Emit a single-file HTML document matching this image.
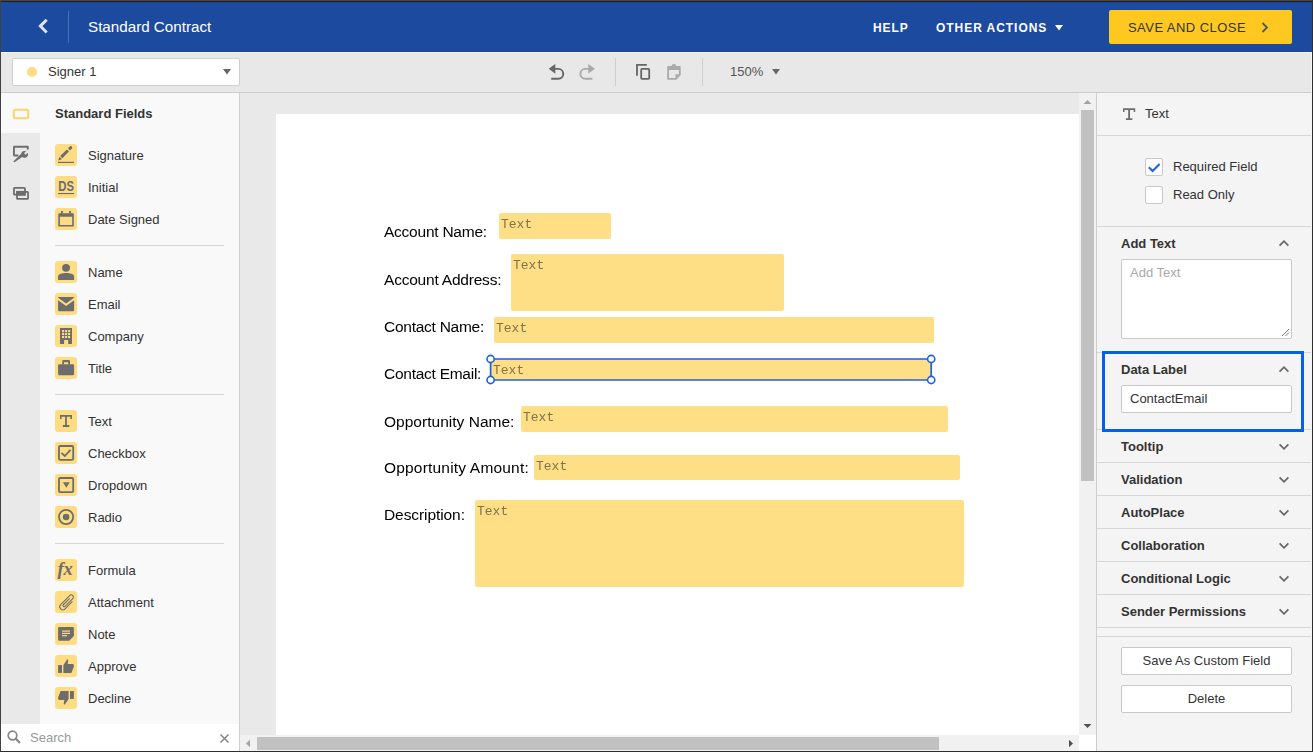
<!DOCTYPE html>
<html><head><meta charset="utf-8">
<style>
*{box-sizing:border-box;margin:0;padding:0}
html,body{width:1313px;height:752px;overflow:hidden;background:#2b2b2b}
body{position:relative;font-family:"Liberation Sans",sans-serif;color:#333}
.a{position:absolute}
.t{position:absolute;white-space:pre;line-height:1}
/* frame */
#frame-top0{left:0;top:0;width:1313px;height:1px;background:#474747}
#frame-top1{left:0;top:1px;width:1313px;height:1px;background:#1f1d1a}
#frame-left{left:0;top:1px;width:1px;height:751px;background:#424242}
#frame-right{left:1312px;top:0;width:1px;height:752px;background:#2e2e2e}
#frame-bot{left:0;top:751px;width:1313px;height:1px;background:#2e2e2e}
.fld{background:#ffdf85;border-radius:2px}
.fld span{will-change:transform;position:absolute;left:2px;top:5px;font-family:"Liberation Mono",monospace;font-size:13px;line-height:1;color:#7f7350;white-space:pre}
#app{left:1px;top:2px;width:1311px;height:749px;background:#e9e9e9;overflow:hidden}
</style></head>
<body>
<div class="a" id="frame-top0"></div>
<div class="a" id="frame-top1"></div>
<div class="a" id="frame-left"></div>
<div class="a" id="frame-right"></div>
<div class="a" id="frame-bot"></div>

<!-- HEADER -->
<div class="a" style="left:1px;top:2px;width:1311px;height:50px;background:#1c4a9f"></div>
<svg class="a" style="left:36px;top:17px" width="14" height="18" viewBox="0 0 14 18"><path d="M10.7 2.7 L4.3 9.1 L10.7 15.5" fill="none" stroke="#dfe3ee" stroke-width="2.9"/></svg>
<div class="a" style="left:68px;top:11px;width:1px;height:32px;background:#4a6fb6"></div>
<div class="t" style="left:88px;top:19px;font-size:15.2px;color:#fff">Standard Contract</div>

<div class="t" style="left:873px;top:22px;font-size:12px;font-weight:700;color:#fff;letter-spacing:0.9px">HELP</div>
<div class="t" style="left:936px;top:22px;font-size:12px;font-weight:700;color:#fff;letter-spacing:0.95px">OTHER ACTIONS</div>
<svg class="a" style="left:1055px;top:25px" width="8" height="6" viewBox="0 0 8 6"><path d="M0 0H8L4 5.5Z" fill="#fff"/></svg>

<div class="a" style="left:1109px;top:10px;width:183px;height:34px;background:#ffc820;border-radius:2px"></div>
<div class="t" style="left:1128px;top:21px;font-size:13px;color:#333;letter-spacing:0.45px">SAVE AND CLOSE</div>
<svg class="a" style="left:1260px;top:22px" width="10" height="11" viewBox="0 0 10 11"><path d="M2.5 1 L7 5.5 L2.5 10" fill="none" stroke="#555" stroke-width="1.8"/></svg>

<!-- TOOLBAR -->
<div class="a" style="left:1px;top:52px;width:1311px;height:1px;background:#f5f4ef"></div>
<div class="a" style="left:1px;top:53px;width:1311px;height:39px;background:#e8e8e8"></div>
<div class="a" style="left:1px;top:92px;width:1311px;height:1px;background:#cdcdcd"></div>

<div class="a" style="left:12px;top:58px;width:228px;height:28px;background:#fff;border:1px solid #cfcfcf;border-radius:2px"></div>
<div class="a" style="left:27px;top:67px;width:10px;height:10px;border-radius:50%;background:#fddc82"></div>
<div class="t" style="left:48px;top:65px;font-size:13px;color:#333">Signer 1</div>
<svg class="a" style="left:223px;top:69px" width="8" height="6" viewBox="0 0 8 6"><path d="M0 0H8L4 5.5Z" fill="#666"/></svg>



<!-- toolbar icons -->
<svg class="a" style="left:548px;top:63px" width="18" height="18" viewBox="0 0 18 18"><path d="M0.7 5.8 L7.3 0.9 V10.7 Z" fill="#666"/><path d="M7 5.9 H10.3 A4.95 4.95 0 0 1 10.3 15.8 H3.2" fill="none" stroke="#666" stroke-width="1.9"/></svg>
<svg class="a" style="left:578px;top:63px" width="18" height="18" viewBox="0 0 18 18"><g transform="matrix(-1 0 0 1 17.6 0)"><path d="M0.7 5.8 L7.3 0.9 V10.7 Z" fill="#a9a9a9"/><path d="M7 5.9 H10.3 A4.95 4.95 0 0 1 10.3 15.8 H3.2" fill="none" stroke="#a9a9a9" stroke-width="1.9"/></g></svg>
<div class="a" style="left:615px;top:58px;width:1px;height:28px;background:#cfcfcf"></div>
<svg class="a" style="left:634px;top:62px" width="18" height="19" viewBox="0 0 18 19"><path d="M3 13.8 V2.8 H12.9" fill="none" stroke="#666" stroke-width="1.8"/><rect x="7.2" y="6.9" width="8" height="10" rx="0.8" fill="none" stroke="#666" stroke-width="1.8"/></svg>
<svg class="a" style="left:665px;top:62px" width="18" height="19" viewBox="0 0 18 19"><path fill="#aaa" fill-rule="evenodd" d="M3.2 4 H14.7 Q15.7 4 15.7 5 V13 L11.3 17.7 H3.2 Q2.2 17.7 2.2 16.7 V5 Q2.2 4 3.2 4 Z M4 8.1 V16 H10.5 V12.3 H13.9 V8.1 Z"/><path fill="#aaa" fill-rule="evenodd" d="M8.9 1.9 A2.4 2.4 0 1 1 8.9 6.7 A2.4 2.4 0 1 1 8.9 1.9 Z M8.9 3.9 A0.8 0.8 0 1 0 8.9 5.5 A0.8 0.8 0 1 0 8.9 3.9 Z"/></svg>
<div class="a" style="left:702px;top:58px;width:1px;height:28px;background:#cfcfcf"></div>
<div class="t" style="left:730px;top:65px;font-size:13px;color:#555">150%</div>
<svg class="a" style="left:772px;top:69px" width="8" height="6" viewBox="0 0 8 6"><path d="M0 0H8L4 5.5Z" fill="#666"/></svg>
<!-- LEFT PANEL -->
<div class="a" style="left:1px;top:93px;width:238px;height:631px;background:#f9f9f9"></div>
<div class="a" style="left:1px;top:133px;width:39px;height:591px;background:#e9e9e9"></div>
<div class="a" style="left:239px;top:93px;width:1px;height:658px;background:#d0d0d0"></div>
<div class="a" style="left:1px;top:724px;width:238px;height:27px;background:#fff"></div>
<!-- nav icons -->
<svg class="a" style="left:12px;top:108px" width="18" height="12" viewBox="0 0 18 12"><rect x="1.8" y="1.8" width="14.4" height="8.4" rx="1.5" fill="none" stroke="#fdd46a" stroke-width="2"/></svg>
<svg class="a" style="left:12px;top:144px" width="18" height="20" viewBox="0 0 18 20"><path d="M6.4 11.55 H2.4 Q1.95 11.55 1.95 11.1 V3.2 Q1.95 2.75 2.4 2.75 H15.4 Q15.85 2.75 15.85 3.2 V7.4" fill="none" stroke="#6d6d6d" stroke-width="1.9"/><path d="M1.3 17.5 L2.6 18.2 L11.6 11.9 L9.4 9.4 Z" fill="#6d6d6d"/><circle cx="12.6" cy="10.3" r="3.4" fill="#6d6d6d"/><path d="M12.9 10 L17 5.9" stroke="#e9e9e9" stroke-width="2.3"/></svg>
<svg class="a" style="left:12px;top:185px" width="18" height="16" viewBox="0 0 18 16"><rect x="1.95" y="2.88" width="11" height="6.84" rx="0.7" fill="none" stroke="#6d6d6d" stroke-width="1.75"/><rect x="4.98" y="6.78" width="11.04" height="7.14" rx="0.7" fill="none" stroke="#6d6d6d" stroke-width="1.75"/><rect x="4.1" y="5.9" width="9.7" height="4.7" fill="#6d6d6d"/></svg>
<div class="t" style="left:55px;top:107px;font-size:13px;font-weight:700;color:#333">Standard Fields</div>
<div class="a" style="left:55px;top:144px;width:22px;height:22px;background:#fddc82;border-radius:3px"><svg width="22" height="22" viewBox="0 0 22 22" fill="#6d6d6d" style="position:absolute;left:0;top:0"><rect x="3" y="17.8" width="16" height="1.2"/><path d="M3.1 16.6 L4.5 12.7 L7 15.2 Z"/><path d="M5.2 12.1 L11.9 5.4 L14 7.5 L7.3 14.2 Z"/><path d="M13 4.3 L15.1 2.2 Q16.1 1.8 16.9 2.6 Q17.5 3.5 17.1 4.3 L15 6.4 Z"/></svg></div>
<div class="t" style="left:88px;top:149px;font-size:13px;color:#333">Signature</div>
<div class="a" style="left:55px;top:176px;width:22px;height:22px;background:#fddc82;border-radius:3px"><svg width="22" height="22" viewBox="0 0 22 22" fill="#6d6d6d" style="position:absolute;left:0;top:0"><text x="4.3" y="14.8" font-family="Liberation Sans" font-weight="700" font-size="14.6" transform="scale(0.77,1)">DS</text><rect x="3" y="17" width="16.1" height="1.1"/></svg></div>
<div class="t" style="left:88px;top:181px;font-size:13px;color:#333">Initial</div>
<div class="a" style="left:55px;top:208px;width:22px;height:22px;background:#fddc82;border-radius:3px"><svg width="22" height="22" viewBox="0 0 22 22" fill="#6d6d6d" style="position:absolute;left:0;top:0"><path fill-rule="evenodd" d="M4.2 5.2 H17.9 Q18.8 5.2 18.8 6.1 V17.7 Q18.8 18.6 17.9 18.6 H4.2 Q3.3 18.6 3.3 17.7 V6.1 Q3.3 5.2 4.2 5.2 Z M4.9 8.7 V17 H17.2 V8.7 Z"/><rect x="6" y="3" width="1.9" height="2.6"/><rect x="14.1" y="3" width="1.9" height="2.6"/></svg></div>
<div class="t" style="left:88px;top:213px;font-size:13px;color:#333">Date Signed</div>
<div class="a" style="left:55px;top:261px;width:22px;height:22px;background:#fddc82;border-radius:3px"><svg width="22" height="22" viewBox="0 0 22 22" fill="#6d6d6d" style="position:absolute;left:0;top:0"><circle cx="11.05" cy="6.85" r="3.95"/><path d="M3.1 19 V15.6 C3.1 12.8 7.2 12 11.1 12 C15 12 19.1 12.8 19.1 15.6 V19 Z"/></svg></div>
<div class="t" style="left:88px;top:266px;font-size:13px;color:#333">Name</div>
<div class="a" style="left:55px;top:293px;width:22px;height:22px;background:#fddc82;border-radius:3px"><svg width="22" height="22" viewBox="0 0 22 22" fill="#6d6d6d" style="position:absolute;left:0;top:0"><path fill-rule="evenodd" d="M4.1 3.9 H18.1 Q19.1 3.9 19.1 4.9 V17.3 Q19.1 18.3 18.1 18.3 H4.1 Q3.1 18.3 3.1 17.3 V4.9 Q3.1 3.9 4.1 3.9 Z M3.1 4.8 L11.1 10.6 L19.1 4.8 V7.2 L11.1 13 L3.1 7.2 Z"/></svg></div>
<div class="t" style="left:88px;top:298px;font-size:13px;color:#333">Email</div>
<div class="a" style="left:55px;top:325px;width:22px;height:22px;background:#fddc82;border-radius:3px"><svg width="22" height="22" viewBox="0 0 22 22" fill="#6d6d6d" style="position:absolute;left:0;top:0"><path fill-rule="evenodd" d="M5 3.1 H17 V19 H13.2 V15 H9.1 V19 H5 Z"/><rect x="7.05" y="5.05" width="2.1" height="2.1" fill="#fddc82"/><rect x="7.05" y="7.95" width="2.1" height="2.1" fill="#fddc82"/><rect x="7.05" y="10.95" width="2.1" height="2.1" fill="#fddc82"/><rect x="10.049999999999999" y="5.05" width="2.1" height="2.1" fill="#fddc82"/><rect x="10.049999999999999" y="7.95" width="2.1" height="2.1" fill="#fddc82"/><rect x="10.049999999999999" y="10.95" width="2.1" height="2.1" fill="#fddc82"/><rect x="13.049999999999999" y="5.05" width="2.1" height="2.1" fill="#fddc82"/><rect x="13.049999999999999" y="7.95" width="2.1" height="2.1" fill="#fddc82"/><rect x="13.049999999999999" y="10.95" width="2.1" height="2.1" fill="#fddc82"/></svg></div>
<div class="t" style="left:88px;top:330px;font-size:13px;color:#333">Company</div>
<div class="a" style="left:55px;top:357px;width:22px;height:22px;background:#fddc82;border-radius:3px"><svg width="22" height="22" viewBox="0 0 22 22" fill="#6d6d6d" style="position:absolute;left:0;top:0"><rect x="3.1" y="7.2" width="16" height="11.1" rx="1.3"/><path fill-rule="evenodd" d="M7.2 7.6 V4.3 Q7.2 3.1 8.4 3.1 H13.8 Q15 3.1 15 4.3 V7.6 H13.2 V5.3 H9 V7.6 Z"/></svg></div>
<div class="t" style="left:88px;top:362px;font-size:13px;color:#333">Title</div>
<div class="a" style="left:55px;top:410px;width:22px;height:22px;background:#fddc82;border-radius:3px"><svg width="22" height="22" viewBox="0 0 22 22" fill="#6d6d6d" style="position:absolute;left:0;top:0"><path d="M5 5 H17 V9 H15.4 V6.8 H11.9 V15 H14.3 V16.9 H7.9 V15 H10.1 V6.8 H6.6 V9 H5 Z"/></svg></div>
<div class="t" style="left:88px;top:415px;font-size:13px;color:#333">Text</div>
<div class="a" style="left:55px;top:442px;width:22px;height:22px;background:#fddc82;border-radius:3px"><svg width="22" height="22" viewBox="0 0 22 22" fill="#6d6d6d" style="position:absolute;left:0;top:0"><rect x="4" y="4" width="14.2" height="13.9" rx="1.2" fill="none" stroke="#6d6d6d" stroke-width="1.8"/><path d="M6.5 10.8 L9.8 14 L15.5 7.8" fill="none" stroke="#6d6d6d" stroke-width="1.8"/></svg></div>
<div class="t" style="left:88px;top:447px;font-size:13px;color:#333">Checkbox</div>
<div class="a" style="left:55px;top:474px;width:22px;height:22px;background:#fddc82;border-radius:3px"><svg width="22" height="22" viewBox="0 0 22 22" fill="#6d6d6d" style="position:absolute;left:0;top:0"><rect x="4" y="4" width="14.2" height="14.1" rx="1.2" fill="none" stroke="#6d6d6d" stroke-width="1.8"/><path d="M7.9 8.3 H14.8 L11.35 13.75 Z"/></svg></div>
<div class="t" style="left:88px;top:479px;font-size:13px;color:#333">Dropdown</div>
<div class="a" style="left:55px;top:506px;width:22px;height:22px;background:#fddc82;border-radius:3px"><svg width="22" height="22" viewBox="0 0 22 22" fill="#6d6d6d" style="position:absolute;left:0;top:0"><circle cx="11.1" cy="11" r="7.1" fill="none" stroke="#6d6d6d" stroke-width="1.8"/><circle cx="11.1" cy="11" r="3.3"/></svg></div>
<div class="t" style="left:88px;top:511px;font-size:13px;color:#333">Radio</div>
<div class="a" style="left:55px;top:559px;width:22px;height:22px;background:#fddc82;border-radius:3px"><svg width="22" height="22" viewBox="0 0 22 22" fill="#6d6d6d" style="position:absolute;left:0;top:0"><text x="2.4" y="16" font-family="Liberation Serif" font-style="italic" font-weight="700" font-size="18.5">fx</text></svg></div>
<div class="t" style="left:88px;top:564px;font-size:13px;color:#333">Formula</div>
<div class="a" style="left:55px;top:591px;width:22px;height:22px;background:#fddc82;border-radius:3px"><svg width="22" height="22" viewBox="0 0 22 22" fill="#6d6d6d" style="position:absolute;left:0;top:0"><path d="M15.05 5.7 V17.9 A3.6 3.6 0 0 1 7.85 17.9 V3.1 A2.55 2.55 0 0 1 12.95 3.1 V15.9 A1.35 1.35 0 0 1 10.25 15.9 V5.5" fill="none" stroke="#6d6d6d" stroke-width="1.25" transform="translate(0.6 0.5) rotate(45 11.45 11) translate(11.45 11) scale(0.86) translate(-11.45 -11)"/></svg></div>
<div class="t" style="left:88px;top:596px;font-size:13px;color:#333">Attachment</div>
<div class="a" style="left:55px;top:623px;width:22px;height:22px;background:#fddc82;border-radius:3px"><svg width="22" height="22" viewBox="0 0 22 22" fill="#6d6d6d" style="position:absolute;left:0;top:0"><path d="M4.1 3.9 H17.9 Q18.9 3.9 18.9 4.9 V13 L14.2 17.7 H4.1 Q3.1 17.7 3.1 16.7 V4.9 Q3.1 3.9 4.1 3.9 Z"/><rect x="7" y="7.5" width="8" height="1.2" fill="#fddc82"/><rect x="7" y="9.8" width="8" height="1.2" fill="#fddc82"/><rect x="7" y="12.1" width="5" height="1.2" fill="#fddc82"/></svg></div>
<div class="t" style="left:88px;top:628px;font-size:13px;color:#333">Note</div>
<div class="a" style="left:55px;top:655px;width:22px;height:22px;background:#fddc82;border-radius:3px"><svg width="22" height="22" viewBox="0 0 22 22" fill="#6d6d6d" style="position:absolute;left:0;top:0"><rect x="3.1" y="10.1" width="3.9" height="7.8"/><path d="M8.4 10 L12.3 4.2 Q13.3 4.4 13.3 5.7 L12.6 9 H17.5 Q18.9 9 18.9 10.4 V11.5 L16.4 17.9 H8.4 Z"/></svg></div>
<div class="t" style="left:88px;top:660px;font-size:13px;color:#333">Approve</div>
<div class="a" style="left:55px;top:687px;width:22px;height:22px;background:#fddc82;border-radius:3px"><svg width="22" height="22" viewBox="0 0 22 22" fill="#6d6d6d" style="position:absolute;left:0;top:0"><g transform="rotate(180 11 11)"><rect x="3.1" y="10.1" width="3.9" height="7.8"/><path d="M8.4 10 L12.3 4.2 Q13.3 4.4 13.3 5.7 L12.6 9 H17.5 Q18.9 9 18.9 10.4 V11.5 L16.4 17.9 H8.4 Z"/></g></svg></div>
<div class="t" style="left:88px;top:692px;font-size:13px;color:#333">Decline</div>
<div class="a" style="left:55px;top:245px;width:169px;height:1px;background:#d8d8d8"></div>
<div class="a" style="left:55px;top:394px;width:169px;height:1px;background:#d8d8d8"></div>
<div class="a" style="left:55px;top:543px;width:169px;height:1px;background:#d8d8d8"></div>

<svg class="a" style="left:6px;top:729px" width="17" height="17" viewBox="0 0 17 17"><circle cx="6.5" cy="6.5" r="4.3" fill="none" stroke="#888" stroke-width="1.7"/><path d="M9.6 9.6 L14 14" stroke="#888" stroke-width="2.2"/></svg>
<div class="t" style="left:30px;top:731px;font-size:13px;color:#999">Search</div>
<svg class="a" style="left:219px;top:733px" width="11" height="11" viewBox="0 0 11 11"><path d="M1.5 1.5L9.5 9.5M9.5 1.5L1.5 9.5" stroke="#888" stroke-width="1.6"/></svg>

<!-- CANVAS -->
<div class="a" style="left:240px;top:93px;width:839px;height:642px;background:#e9e9e9"></div>
<div class="a" style="left:276px;top:114px;width:803px;height:621px;background:#fff"></div>

<!-- DOCUMENT -->
<div class="t" style="left:384px;top:224px;font-size:15.5px;color:#000;will-change:transform;letter-spacing:-0.24px">Account Name:</div>
<div class="t" style="left:384px;top:272px;font-size:15.5px;color:#000;will-change:transform;letter-spacing:-0.21px">Account Address:</div>
<div class="t" style="left:384px;top:319px;font-size:15.5px;color:#000;will-change:transform;letter-spacing:-0.26px">Contact Name:</div>
<div class="t" style="left:384px;top:366px;font-size:15.5px;color:#000;will-change:transform;letter-spacing:-0.26px">Contact Email:</div>
<div class="t" style="left:384px;top:414px;font-size:15.5px;color:#000;will-change:transform;letter-spacing:0.02px">Opportunity Name:</div>
<div class="t" style="left:384px;top:460px;font-size:15.5px;color:#000;will-change:transform;letter-spacing:0.19px">Opportunity Amount:</div>
<div class="t" style="left:384px;top:507px;font-size:15.5px;color:#000;will-change:transform;letter-spacing:-0.08px">Description:</div>

<div class="a fld" style="left:499px;top:213px;width:112px;height:26px"><span>Text</span></div>
<div class="a fld" style="left:511px;top:254px;width:273px;height:57px"><span>Text</span></div>
<div class="a fld" style="left:494px;top:317px;width:440px;height:26px"><span>Text</span></div>
<div class="a fld" style="left:491px;top:359px;width:440px;height:21px;border-radius:0"><span style="left:2px;top:5px">Text</span></div>
<div class="a fld" style="left:521px;top:406px;width:427px;height:26px"><span>Text</span></div>
<div class="a fld" style="left:534px;top:455px;width:426px;height:25px"><span>Text</span></div>
<div class="a fld" style="left:475px;top:500px;width:489px;height:87px"><span>Text</span></div>
<svg class="a" style="left:484px;top:352px" width="454" height="35" viewBox="0 0 454 35"><path d="M6.6 7 H447.2 V28 H6.6 Z" fill="none" stroke="#1f62dd" stroke-width="1.7"/><circle cx="6.6" cy="7" r="3.6" fill="#fff" stroke="#1f62dd" stroke-width="1.6"/><circle cx="6.6" cy="28" r="3.6" fill="#fff" stroke="#1f62dd" stroke-width="1.6"/><circle cx="447.2" cy="7" r="3.6" fill="#fff" stroke="#1f62dd" stroke-width="1.6"/><circle cx="447.2" cy="28" r="3.6" fill="#fff" stroke="#1f62dd" stroke-width="1.6"/></svg>
<!-- v scroll -->
<div class="a" style="left:1079px;top:93px;width:17px;height:642px;background:#f1f1f1"></div>
<svg class="a" style="left:1083px;top:99px" width="9" height="6" viewBox="0 0 9 6"><path d="M0.5 5H8.5L4.5 1Z" fill="#a3a3a3"/></svg>
<div class="a" style="left:1081px;top:110px;width:13px;height:371px;background:#c1c1c1"></div>
<svg class="a" style="left:1083px;top:723px" width="9" height="6" viewBox="0 0 9 6"><path d="M0.5 1H8.5L4.5 5Z" fill="#505050"/></svg>
<!-- h scroll -->
<div class="a" style="left:240px;top:735px;width:839px;height:16px;background:#f1f1f1"></div>
<svg class="a" style="left:244px;top:739px" width="8" height="9" viewBox="0 0 8 9"><path d="M6 0.8V8.2L2 4.5Z" fill="#a3a3a3"/></svg>
<div class="a" style="left:257px;top:737px;width:682px;height:13px;background:#c1c1c1"></div>
<svg class="a" style="left:1067px;top:739px" width="8" height="9" viewBox="0 0 8 9"><path d="M2 0.8V8.2L6 4.5Z" fill="#505050"/></svg>
<div class="a" style="left:1079px;top:735px;width:17px;height:16px;background:#fff"></div>

<!-- RIGHT PANEL -->
<div class="a" style="left:1096px;top:93px;width:1px;height:658px;background:#cdcdcd"></div>
<div class="a" style="left:1097px;top:93px;width:214px;height:658px;background:#f4f4f4"></div>
<div class="a" style="left:1311px;top:53px;width:1px;height:698px;background:#f4f4f4"></div>

<svg class="a" style="left:1122px;top:107px" width="15" height="15" viewBox="0 0 15 15"><path d="M1 1.2 H13.2 V5 H11.7 V2.9 H8 V11.3 H10.3 V13.1 H3.9 V11.3 H6.2 V2.9 H2.5 V5 H1 Z" fill="#6d6d6d"/></svg>
<div class="t" style="left:1145px;top:107px;font-size:13px;color:#333">Text</div>
<div class="a" style="left:1097px;top:135px;width:214px;height:1px;background:#d6d6d6"></div>
<div class="a" style="left:1145px;top:158px;width:18px;height:18px;background:#fff;border:1px solid #c9c9c9;border-radius:2px"></div>
<svg class="a" style="left:1145px;top:158px" width="18" height="18" viewBox="0 0 18 18"><path d="M3.8 9.2 L7.6 13 L14.6 6" fill="none" stroke="#1d64dc" stroke-width="2.1"/></svg>
<div class="t" style="left:1173px;top:160px;font-size:13px;color:#333">Required Field</div>
<div class="a" style="left:1145px;top:186px;width:18px;height:18px;background:#fff;border:1px solid #c9c9c9;border-radius:2px"></div>
<div class="t" style="left:1173px;top:188px;font-size:13px;color:#333">Read Only</div>
<div class="a" style="left:1097px;top:226px;width:214px;height:1px;background:#d6d6d6"></div>

<div class="t" style="left:1121px;top:237px;font-size:13px;font-weight:700;color:#333">Add Text</div>
<svg class="a" style="left:1278px;top:238px" width="12" height="10" viewBox="0 0 12 10"><path d="M1.6 7.6 L6 3.2 L10.4 7.6" fill="none" stroke="#666" stroke-width="1.7"/></svg>
<div class="a" style="left:1121px;top:259px;width:171px;height:80px;background:#fff;border:1px solid #c9c9c9;border-radius:2px"></div>
<div class="t" style="left:1130px;top:266px;font-size:13px;color:#aaa">Add Text</div>
<svg class="a" style="left:1280px;top:327px" width="10" height="10" viewBox="0 0 10 10"><path d="M2 9 L9 2 M5.5 9 L9 5.5" stroke="#777" stroke-width="1"/></svg>

<div class="a" style="left:1097px;top:352px;width:214px;height:1px;background:#d6d6d6"></div>
<div class="a" style="left:1097px;top:429px;width:214px;height:1px;background:#d6d6d6"></div>
<div class="a" style="left:1102px;top:351px;width:202px;height:81px;border:3px solid #0063e6"></div>
<div class="t" style="left:1121px;top:363px;font-size:13px;font-weight:700;color:#333">Data Label</div>
<svg class="a" style="left:1278px;top:364px" width="12" height="10" viewBox="0 0 12 10"><path d="M1.6 7.6 L6 3.2 L10.4 7.6" fill="none" stroke="#666" stroke-width="1.7"/></svg>
<div class="a" style="left:1121px;top:385px;width:171px;height:28px;background:#fff;border:1px solid #c9c9c9;border-radius:2px"></div>
<div class="t" style="left:1130px;top:392px;font-size:13px;color:#333">ContactEmail</div>
<div class="t" style="left:1121px;top:440px;font-size:13px;font-weight:700;color:#333">Tooltip</div>
<svg class="a" style="left:1278px;top:442px" width="12" height="10" viewBox="0 0 12 10"><path d="M1.6 2.4 L6 6.8 L10.4 2.4" fill="none" stroke="#666" stroke-width="1.7"/></svg>
<div class="a" style="left:1097px;top:462px;width:214px;height:1px;background:#d6d6d6"></div>
<div class="t" style="left:1121px;top:473px;font-size:13px;font-weight:700;color:#333">Validation</div>
<svg class="a" style="left:1278px;top:475px" width="12" height="10" viewBox="0 0 12 10"><path d="M1.6 2.4 L6 6.8 L10.4 2.4" fill="none" stroke="#666" stroke-width="1.7"/></svg>
<div class="a" style="left:1097px;top:495px;width:214px;height:1px;background:#d6d6d6"></div>
<div class="t" style="left:1121px;top:506px;font-size:13px;font-weight:700;color:#333">AutoPlace</div>
<svg class="a" style="left:1278px;top:508px" width="12" height="10" viewBox="0 0 12 10"><path d="M1.6 2.4 L6 6.8 L10.4 2.4" fill="none" stroke="#666" stroke-width="1.7"/></svg>
<div class="a" style="left:1097px;top:528px;width:214px;height:1px;background:#d6d6d6"></div>
<div class="t" style="left:1121px;top:539px;font-size:13px;font-weight:700;color:#333">Collaboration</div>
<svg class="a" style="left:1278px;top:541px" width="12" height="10" viewBox="0 0 12 10"><path d="M1.6 2.4 L6 6.8 L10.4 2.4" fill="none" stroke="#666" stroke-width="1.7"/></svg>
<div class="a" style="left:1097px;top:561px;width:214px;height:1px;background:#d6d6d6"></div>
<div class="t" style="left:1121px;top:572px;font-size:13px;font-weight:700;color:#333">Conditional Logic</div>
<svg class="a" style="left:1278px;top:574px" width="12" height="10" viewBox="0 0 12 10"><path d="M1.6 2.4 L6 6.8 L10.4 2.4" fill="none" stroke="#666" stroke-width="1.7"/></svg>
<div class="a" style="left:1097px;top:594px;width:214px;height:1px;background:#d6d6d6"></div>
<div class="t" style="left:1121px;top:605px;font-size:13px;font-weight:700;color:#333">Sender Permissions</div>
<svg class="a" style="left:1278px;top:607px" width="12" height="10" viewBox="0 0 12 10"><path d="M1.6 2.4 L6 6.8 L10.4 2.4" fill="none" stroke="#666" stroke-width="1.7"/></svg>
<div class="a" style="left:1097px;top:627px;width:214px;height:1px;background:#d6d6d6"></div>
<div class="a" style="left:1097px;top:636px;width:214px;height:1px;background:#d6d6d6"></div>
<div class="a" style="left:1121px;top:647px;width:171px;height:28px;background:#fff;border:1px solid #c9c9c9;border-radius:2px"></div>
<div class="t" style="left:1121px;top:654px;width:171px;text-align:center;font-size:13px;color:#333">Save As Custom Field</div>
<div class="a" style="left:1121px;top:685px;width:171px;height:28px;background:#fff;border:1px solid #c9c9c9;border-radius:2px"></div>
<div class="t" style="left:1121px;top:692px;width:171px;text-align:center;font-size:13px;color:#333">Delete</div>
</body></html>
